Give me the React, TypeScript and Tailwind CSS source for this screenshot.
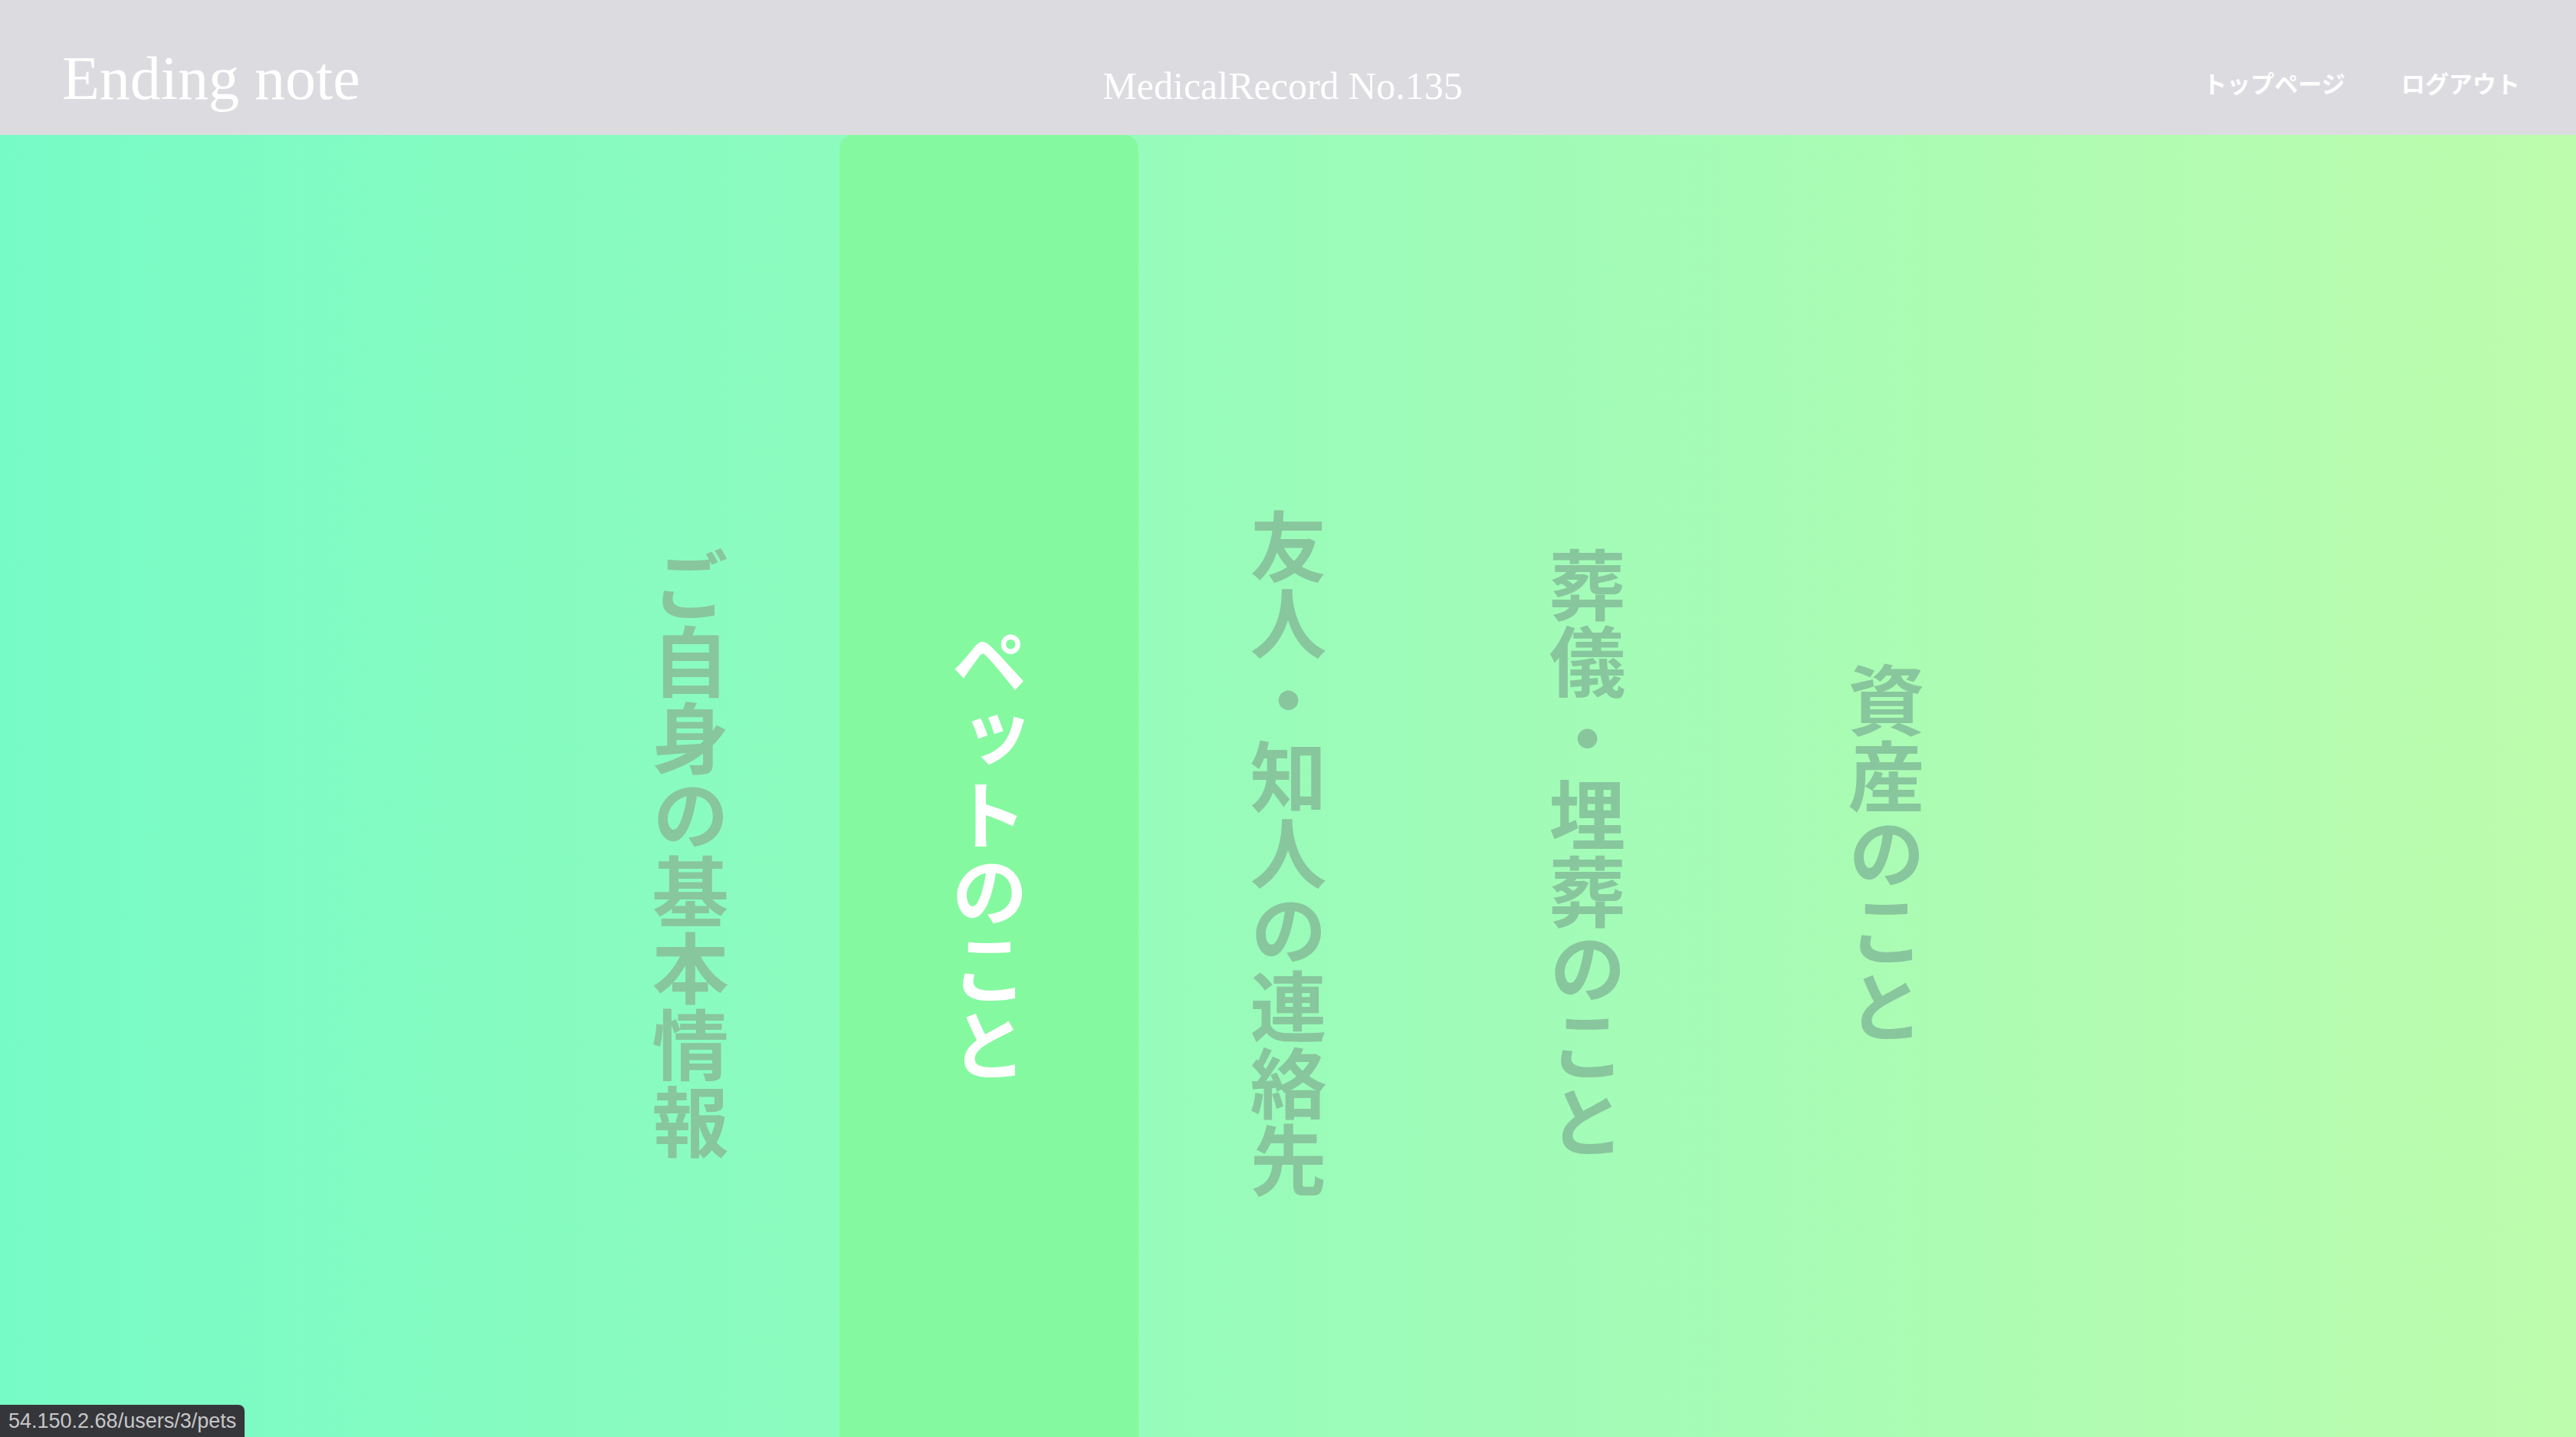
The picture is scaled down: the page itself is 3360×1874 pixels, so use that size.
import React from "react";

const sections = [
  { label: "ご自身の基本情報", active: false },
  { label: "ペットのこと", active: true },
  { label: "友人・知人の連絡先", active: false },
  { label: "葬儀・埋葬のこと", active: false },
  { label: "資産のこと", active: false },
];

const jp = "font-['Noto_Sans_CJK_JP','Noto_Sans',sans-serif]";
const serif = "font-['Liberation_Serif','Times_New_Roman',serif]";

function Header() {
  return (
    <header className="grid grid-cols-[1fr_auto_1fr] items-baseline h-[176px] pt-[62px] px-[73px] bg-[#dcdce0] text-white">
      <a href="#" className={`${serif} ml-[8px] text-[80px] leading-none`}>
        Ending note
      </a>
      <h1 className={`${serif} text-[50px] leading-none -translate-x-[7px]`}>MedicalRecord No.135</h1>
      <nav className={`${jp} flex justify-end gap-[73px] text-[31px] font-bold leading-none -translate-y-[8px]`}>
        <a href="#">トップページ</a>
        <a href="#">ログアウト</a>
      </nav>
    </header>
  );
}

export default function App() {
  return (
    <div className="min-h-screen">
      <Header />
      <main className="flex justify-center h-screen bg-[linear-gradient(to_right,#77fbc6,#bdfcad)]">
        {sections.map((s) => (
          <a
            key={s.label}
            href="#"
            className={`flex w-[390px] h-full items-center justify-center ${
              s.active ? "bg-[#85f9a0] rounded-t-[18px] text-white" : "text-[#88c69d]"
            }`}
          >
            <span className={`${jp} [writing-mode:vertical-rl] text-[100px] font-bold leading-none`}>
              {s.label}
            </span>
          </a>
        ))}
      </main>
      <div className="fixed bottom-0 left-0 h-[42px] flex items-center px-[11px] bg-[#35363a] rounded-tr-[8px] text-[#c7c7c9] text-[27px] font-['Liberation_Sans',Arial,sans-serif]">
        54.150.2.68/users/3/pets
      </div>
    </div>
  );
}
